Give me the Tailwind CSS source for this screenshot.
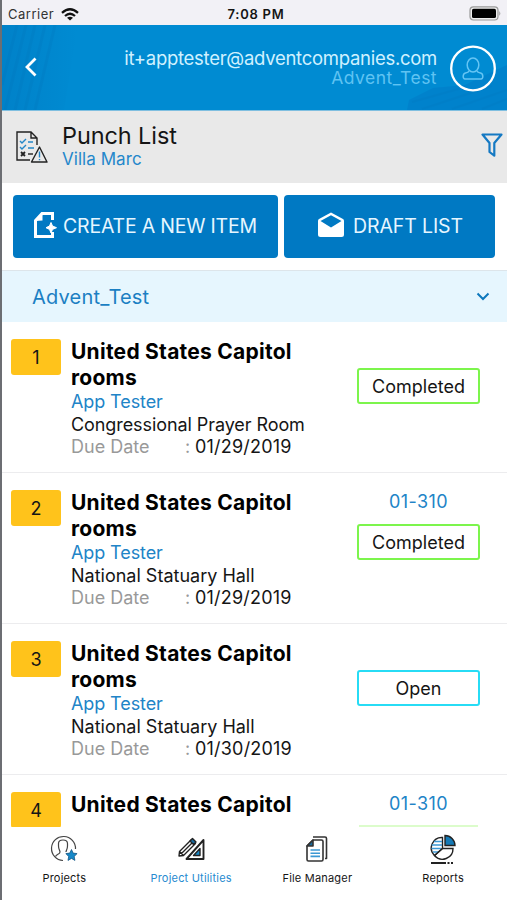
<!DOCTYPE html>
<html lang="en">
<head>
<meta charset="utf-8">
<title>Punch List</title>
<script src="https://cdn.jsdelivr.net/npm/@tailwindcss/browser@4"></script>
</head>
<body class="font-['Inter','Liberation_Sans',sans-serif] bg-white text-[#151515]">
<div class="w-[507px] h-[900px] overflow-hidden flex flex-col border-l-2 border-[#6c6e73] whitespace-nowrap">
  <header class="h-[25px] shrink-0 bg-[#f2f1f6] grid grid-cols-3 items-center text-[13px] leading-[25px]">
    <div class="flex items-center gap-[7px] pl-[6px] pt-[2px] text-[#333] tracking-[0.5px]"><span>Carrier</span>
      <svg class="w-[18px] h-[13px]" viewBox="0 0 18 13" fill="none" stroke="#111" stroke-width="2.3"><path d="M1 4.8Q9-2.200 17 4.800M4 8Q9 3.600 14 8"/><path d="M9 12.600L6 9.700Q9 7.600 12 9.700Z" fill="#111" stroke="none"/></svg>
    </div>
    <div class="text-center font-semibold pt-[2px] pl-[3px] tracking-[0.75px]">7:08 PM</div>
    <div class="flex justify-end pr-[6px]"><svg class="w-[32px] h-[15px]" viewBox="0 0 32 15"><rect x="1" y=".8" width="28" height="13.200" rx="3.500" fill="#eee" stroke="#999" stroke-width="1.200"/><rect x="3" y="2.800" width="24" height="9.200" rx="1.600" fill="#000"/><path d="M30.300 5Q32.300 7.400 30.300 9.800Z" fill="#999"/></svg></div>
  </header>

  <div class="h-[86px] shrink-0 bg-[#008bd2] relative flex items-center border-b border-[#80bfe0]">
    <svg class="absolute inset-0 w-full h-[85px]" viewBox="0 0 505 85" preserveAspectRatio="none">
      <defs><linearGradient id="shade"><stop offset="0" stop-color="#0070b8" stop-opacity=".35"/><stop offset="1" stop-color="#0070b8" stop-opacity="0"/></linearGradient></defs>
      <path d="M0 0H76L62 85H0Z" fill="url(#shade)"/>
      <g stroke="#006eb4" stroke-width="3" opacity=".17"><path d="M15 0L0 60M24 0L3 85M33 0L13 85M43 0L23 85M53 0L33 85"/></g>
      <path d="M405 85L407 75 431 63 463 60 494 45 505 40V85Z" fill="#0077c5" opacity=".45"/>
      <g stroke="#006fb8" stroke-width="2" opacity=".15"><path d="M410 77L460 63M420 84L490 61M450 84L505 65M480 84L505 74"/></g>
    </svg>
    <svg class="relative w-[12px] h-[20px] ml-[23px] -mt-[2px]" viewBox="0 0 12 20" fill="none" stroke="#fff" stroke-width="2.800"><path d="M10.500 1.500L2 10l8.500 8.500"/></svg>
    <div class="relative ml-auto text-right">
      <div class="text-[18.500px] leading-[20px] text-[#d0f1ff] tracking-[-0.28px]">it+apptester@adventcompanies.com</div>
      <div class="text-[17.500px] leading-[19px] text-[#5fc3f2] tracking-[0.45px]">Advent_Test</div>
    </div>
    <svg class="relative w-[48px] h-[48px] ml-[12px] mr-[10px]" viewBox="0 0 48 48" fill="none"><circle cx="24" cy="24.500" r="21.800" stroke="#fff" stroke-width="2.300"/><g stroke="#65c5f4" stroke-width="1.500"><ellipse cx="24" cy="21" rx="5.800" ry="7"/><path d="M20 27Q19.500 28.500 16.500 29C13.500 29.800 13.500 35 16 35H32C34.500 35 34.500 29.800 31.500 29Q28.500 28.500 28 27"/></g></svg>
  </div>

  <div class="h-[72px] shrink-0 bg-[#e9e9e9] flex items-center">
    <svg class="w-[32px] h-[33px] ml-[14px]" viewBox="0 0 32 33" fill="none" stroke="#222" stroke-width="1.400"><path d="M14 29H1V1H15L21 7V14M15 1V7H21"/><path d="M23.500 16L31 31H15.500Z" stroke-linejoin="round"/><path d="M5 21l4 4M9 21l-4 4" stroke-width="1.800"/><path d="M12 23H17"/><path d="M4 10l2 2 4-4M4 16l2 2 4-4M12 11H17M12 17H18M23.500 20.500v6M23.500 28v1.300" stroke="#2386c8"/></svg>
    <div class="ml-[14px] -mt-[2px]">
      <div class="text-[23.500px] leading-[26px] tracking-[-0.1px]">Punch List</div>
      <div class="text-[17px] leading-[20px] tracking-[0.05px] text-[#2487cb]">Villa Marc</div>
    </div>
    <svg class="w-[22px] h-[25px] ml-auto mr-[4px] -mt-[4px]" viewBox="0 0 22 25" fill="none" stroke="#1579c3" stroke-width="2.200" stroke-linejoin="round"><path d="M1.500 1.500H20.500L13.300 10V22.700L8.500 19V10Z"/></svg>
  </div>

  <div class="h-[87px] shrink-0 flex pt-[12px] pl-[11px] gap-[6px] text-[#e6f6ff] text-[19.500px]">
    <div class="w-[265px] h-[63px] rounded-[4px] bg-[#0079c3] flex items-center pl-[20px]">
      <svg class="w-[24px] h-[28px] -mt-[4px]" viewBox="0 0 24 28"><path d="M19.500 9V2.500H9L2.500 9.500V25.500H19.500V21" fill="none" stroke="#fff" stroke-width="3"/><path d="M2 10L9.500 2V9.500Z" fill="#fff"/><path d="M18 11.500l1.500 3.500 4 1.700-4 1.700L18 22l-1.500-3.600-3.500-1.700 3.500-1.700Z" fill="#fff" stroke="#fff"/></svg>
      <span class="ml-[6px] mt-[1px] tracking-[-0.2px]">CREATE A NEW ITEM</span>
    </div>
    <div class="w-[211px] h-[63px] rounded-[4px] bg-[#0079c3] flex items-center pl-[33px]">
      <svg class="w-[28px] h-[26px] -mt-[4px]" viewBox="0 0 28 26"><path fill="#fff" fill-rule="evenodd" d="M14 .5L26 7Q27 7.600 27 9V22.500Q27 25 24.500 25H3.500Q1 25 1 22.500V9Q1 7.600 2 7ZM14 3.200L3.500 9 14 15.500 24.500 9Z"/></svg>
      <span class="ml-[8px] mt-[1px] tracking-[-0.1px]">DRAFT LIST</span>
    </div>
  </div>

  <div class="h-[52px] shrink-0 bg-[#e6f6fe] border-t border-[#dde5ea] flex items-center pl-[30px] pr-[17px] text-[#1b7fc3] text-[20px] tracking-[0.2px]">
    <span>Advent_Test</span>
    <svg class="w-[14px] h-[9px] ml-auto" viewBox="0 0 14 9" fill="none" stroke="#0d78bd" stroke-width="2"><path d="M1.500 1.500L7 7l5.500-5.500"/></svg>
  </div>

  <main class="h-[505px] shrink-0 overflow-hidden">
    <article class="h-[151px] border-b border-[#ececee] flex pl-[9px] pt-[17px]">
      <div class="w-[50px] h-[36px] rounded-[3px] bg-[#ffc31b] grid place-items-center text-[18px]">1</div>
      <div class="w-[286px] ml-[10px] text-[18px] leading-[22.500px]">
        <h2 class="font-bold text-[21px] leading-[26px] tracking-[0.25px] text-black">United States Capitol<br>rooms</h2>
        <p class="text-[#2184c7] tracking-[-0.1px]">App Tester</p><p class="tracking-[-0.08px]">Congressional Prayer Room</p>
        <p class="flex"><span class="w-[114px] text-[#999]">Due Date</span><span class="w-[10px] text-[#999]">:</span><span class="tracking-[0.2px]">01/29/2019</span></p>
      </div>
      <div class="w-[123px] flex flex-col items-center pt-[29px]"><div class="w-full h-[36px] rounded-[3px] border-2 border-[#7cf54c] grid place-items-center text-[18px]">Completed</div></div>
    </article>
    <article class="h-[151px] border-b border-[#ececee] flex pl-[9px] pt-[17px]">
      <div class="w-[50px] h-[36px] rounded-[3px] bg-[#ffc31b] grid place-items-center text-[18px]">2</div>
      <div class="w-[286px] ml-[10px] text-[18px] leading-[22.500px]">
        <h2 class="font-bold text-[21px] leading-[26px] tracking-[0.25px] text-black">United States Capitol<br>rooms</h2>
        <p class="text-[#2184c7] tracking-[-0.1px]">App Tester</p><p>National Statuary Hall</p>
        <p class="flex"><span class="w-[114px] text-[#999]">Due Date</span><span class="w-[10px] text-[#999]">:</span><span class="tracking-[0.2px]">01/29/2019</span></p>
      </div>
      <div class="w-[123px] flex flex-col items-center text-[18px]"><div class="h-[34px] leading-[24px] tracking-[0.4px] text-[#2184c7]">01-310</div><div class="w-full h-[36px] rounded-[3px] border-2 border-[#7cf54c] grid place-items-center">Completed</div></div>
    </article>
    <article class="h-[151px] border-b border-[#ececee] flex pl-[9px] pt-[17px]">
      <div class="w-[50px] h-[36px] rounded-[3px] bg-[#ffc31b] grid place-items-center text-[18px]">3</div>
      <div class="w-[286px] ml-[10px] text-[18px] leading-[22.500px]">
        <h2 class="font-bold text-[21px] leading-[26px] tracking-[0.25px] text-black">United States Capitol<br>rooms</h2>
        <p class="text-[#2184c7] tracking-[-0.1px]">App Tester</p><p>National Statuary Hall</p>
        <p class="flex"><span class="w-[114px] text-[#999]">Due Date</span><span class="w-[10px] text-[#999]">:</span><span class="tracking-[0.2px]">01/30/2019</span></p>
      </div>
      <div class="w-[123px] flex flex-col items-center pt-[29px]"><div class="w-full h-[36px] rounded-[3px] border-2 border-[#27dcf5] grid place-items-center text-[18px]">Open</div></div>
    </article>
    <article class="h-[151px] flex pl-[9px] pt-[17px]">
      <div class="w-[50px] h-[36px] rounded-[3px] bg-[#ffc31b] grid place-items-center text-[18px]">4</div>
      <div class="w-[286px] ml-[10px]"><h2 class="font-bold text-[21px] leading-[26px] tracking-[0.25px] text-black">United States Capitol</h2></div>
      <div class="w-[123px] flex flex-col items-center text-[18px]"><div class="h-[33px] leading-[24px] tracking-[0.4px] text-[#2184c7]">01-310</div><div class="w-[119px] h-[2px] bg-[#dcfccb]"></div></div>
    </article>
  </main>

  <nav class="h-[73px] shrink-0 bg-white flex pt-[7px] text-[11px] text-center tracking-[0.2px]">
    <div class="w-[125px] flex flex-col items-center"><svg class="w-[28px] h-[30px]" viewBox="0 0 28 30" fill="none" stroke="#444" stroke-width="1.200"><path d="M13 26.500A12 12 0 1 1 25.500 15"/><path d="M5.500 22.500C6.500 20 10 20.500 10 18C10 16.500 8.500 15.500 8.500 12V9.500Q8.500 6 13 6T17.500 9.500V12C17.500 15.500 16 16.500 16 18"/><path d="M21.500 15.500l1.600 3.600 4 .5-2.900 2.800.7 4-3.400-2-3.500 2 .7-4-2.900-2.800 4-.5Z" fill="#1688c8" stroke="#175784" stroke-width=".8"/></svg><span class="mt-[6px]">Projects</span></div>
    <div class="w-[129px] flex flex-col items-center text-[#278bd0]"><svg class="w-[28px] h-[30px]" viewBox="0 0 28 30" fill="none" stroke="#222" stroke-width="1.400" stroke-linejoin="round"><path d="M2.500 17.500L14.500 5.500l4 4L6.500 21.500 2 22ZM4.500 19.500L16.500 7.500M2.500 17.500l4 4"/><path d="M13 7l2.500-2.500 3.500 3.500-2.500 2.500Z" fill="#176a9e"/><path d="M9.500 25H26.500V6Z" stroke-width="1.900"/><path d="M16.500 21.500h6.500v-7Z" fill="#1688c8"/></svg><span class="mt-[6px]">Project Utilities</span></div>
    <div class="w-[124px] flex flex-col items-center"><svg class="w-[28px] h-[30px]" viewBox="0 0 28 30" fill="none" stroke="#333" stroke-width="1.600" stroke-linejoin="round"><path d="M10 3H22Q23.500 3 23.500 4.500V24.500H22"/><path d="M10 6H18.500Q20 6 20 7.500V25.500Q20 27 18.500 27H5.500Q4 27 4 25.500V12Z"/><path d="M4 12L10 6V12Z" fill="#176a9e"/><path d="M7.500 16H17M7.500 19.200H17M7.500 22.400H17" stroke="#3b98d4"/></svg><span class="mt-[6px]">File Manager</span></div>
    <div class="w-[128px] flex flex-col items-center"><svg class="w-[28px] h-[30px]" viewBox="0 0 28 30" fill="none" stroke="#222" stroke-width="1.400"><path d="M13.500 3.500A10.500 10.500 0 0 0 5.500 21.500L13.500 14.500Z"/><path d="M5 7.500H13M2.800 11H13M2.500 14.500H12M4 18H9" stroke="#3b98d4"/><path d="M5.500 21.500A10.500 10.500 0 0 0 24 14.500H13.500Z"/><path d="M16 1.500V11.500H26A10 10 0 0 0 16 1.500Z" fill="#1479b5"/><path d="M2 29H17M18.500 29h2M22 29h2" stroke-width="1.800"/></svg><span class="mt-[6px]">Reports</span></div>
  </nav>
</div>
</body>
</html>
